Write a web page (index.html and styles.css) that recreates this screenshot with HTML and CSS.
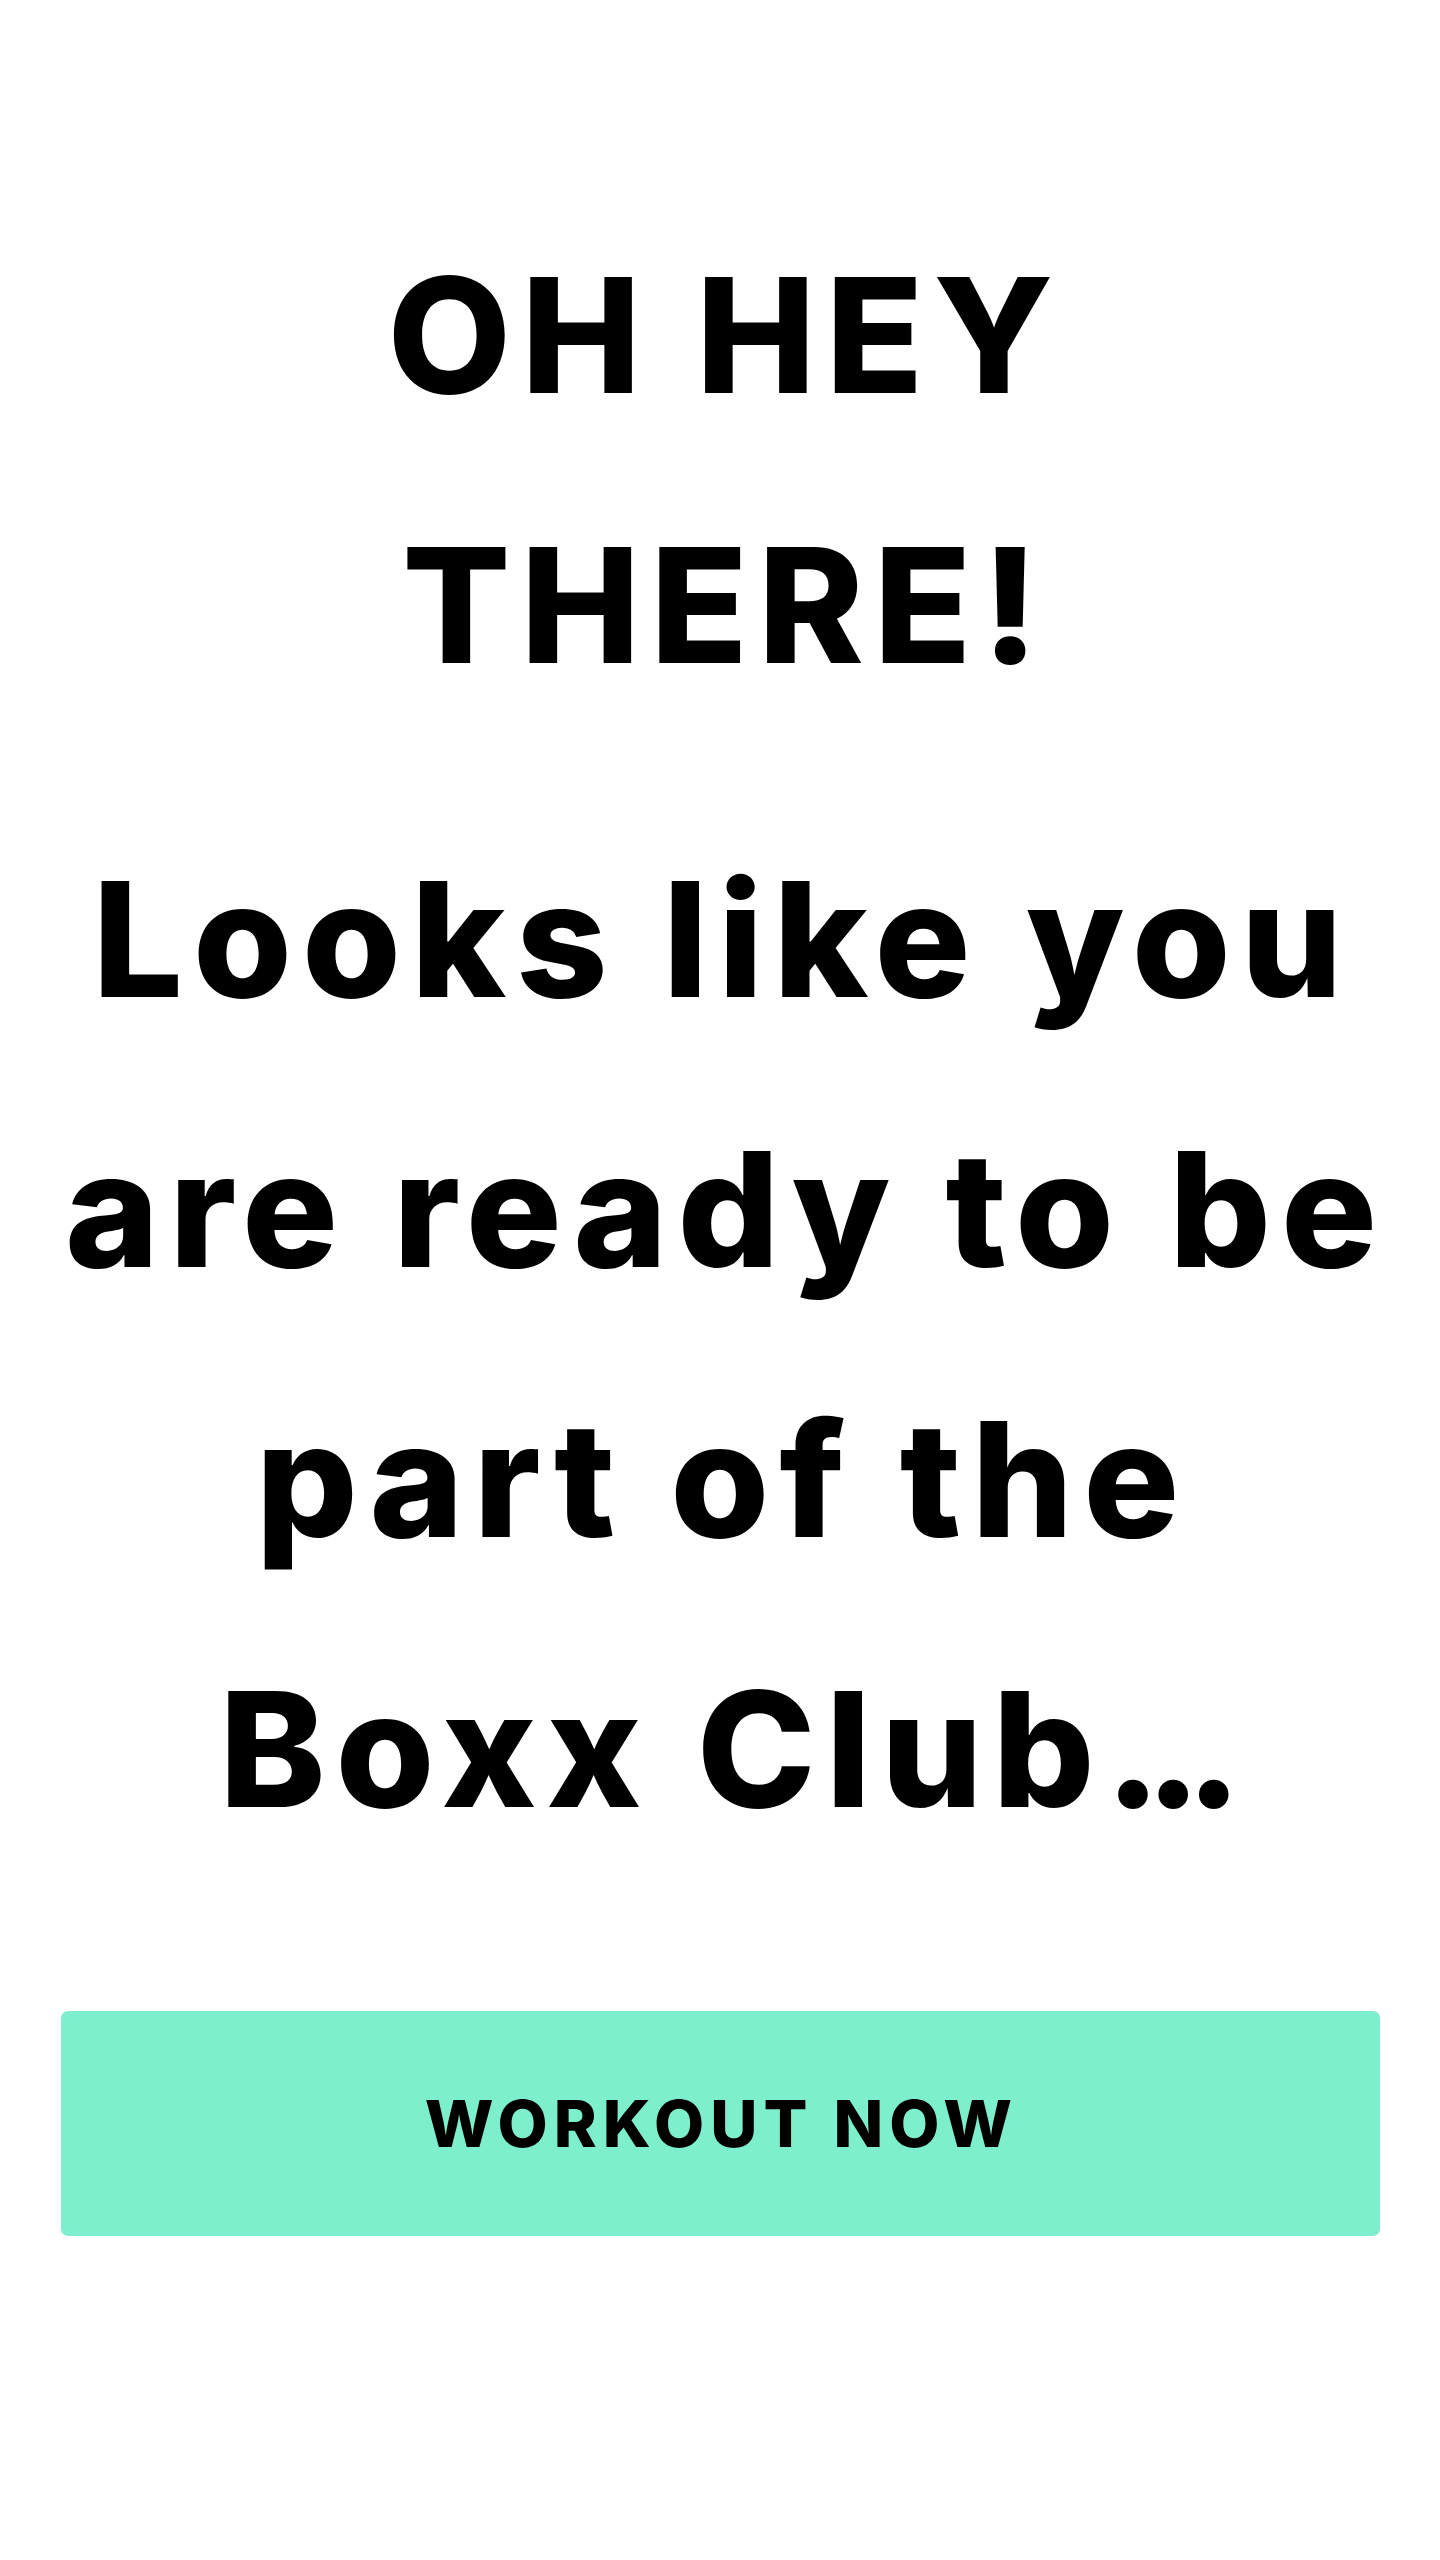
FILE: index.html
```html
<!DOCTYPE html>
<html lang="en">
<head>
<meta charset="utf-8">
<title>Boxx Club</title>
<link rel="stylesheet" href="styles.css">
</head>
<body>
<main class="page">
  <section class="hero">
    <h1 class="greeting">OH HEY<br>THERE!</h1>
    <h2 class="message">Looks like you<br>are ready to be<br>part of the<br>Boxx Club<span class="dots">...</span></h2>
  </section>
  <a class="cta" href="#">WORKOUT NOW</a>
</main>
</body>
</html>
```
FILE: styles.css
```css
html, body {
  margin: 0;
  padding: 0;
  background: #ffffff;
}

.page {
  display: flex;
  flex-direction: column;
  align-items: stretch;
  padding: 200px 60px 0 61px;
  font-family: "Inter", "DejaVu Sans", sans-serif;
  color: #000000;
}

.hero {
  display: flex;
  flex-direction: column;
  gap: 64px;
}

.greeting,
.message {
  margin: 0;
  padding-left: 4px;
  text-align: center;
  font-size: 160px;
  font-weight: 800;
  line-height: 270px;
  letter-spacing: 10px;
  white-space: nowrap;
}

.greeting {
  padding-left: 10px;
}

.dots {
  letter-spacing: -16px;
}

.cta {
  margin-top: 127px;
  height: 225px;
  display: flex;
  align-items: center;
  justify-content: center;
  padding-left: 2px;
  background: #7defcc;
  border-radius: 7px;
  color: #000000;
  text-decoration: none;
  font-size: 65px;
  font-weight: 800;
  letter-spacing: 6px;
}
```
